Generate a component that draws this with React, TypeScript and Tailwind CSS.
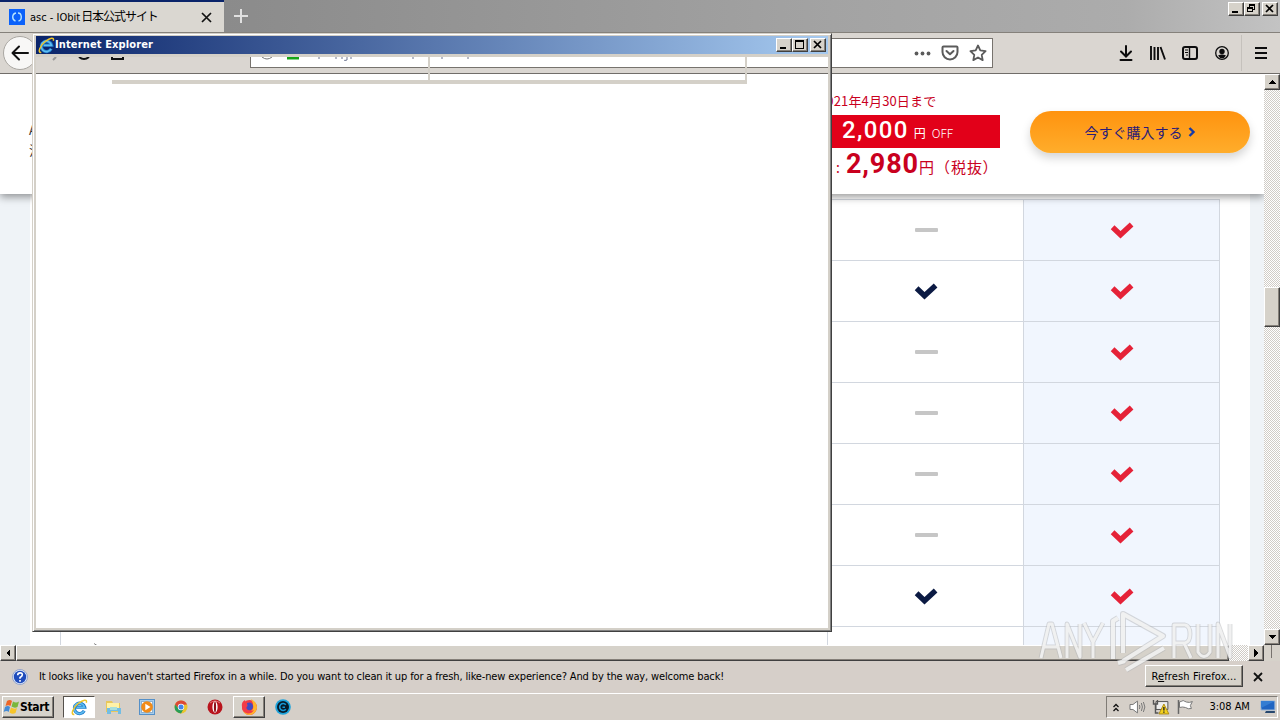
import React from "react";

const dither =
  "bg-[repeating-conic-gradient(#ffffff_0_25%,#d0ccc6_0_50%)] bg-[length:2px_2px]";
const raised =
  "bg-[#d6d2ca] border border-t-white border-l-white border-r-[#404040] border-b-[#404040] shadow-[inset_-1px_-1px_0_#858079]";

function Glyph({ kind }: { kind: "min" | "max" | "restore" | "close" }) {
  return (
    <svg width="14" height="12" viewBox="0 0 14 12" shapeRendering="crispEdges" fill="none" stroke="#000">
      {kind === "min" && <path d="M3 9h6" strokeWidth="2" />}
      {kind === "max" && (
        <>
          <path d="M2.5 2.5h8v7h-8z" />
          <path d="M2 2h9" strokeWidth="2" />
        </>
      )}
      {kind === "restore" && (
        <>
          <path d="M4.5 4V1.500h5v5H8" />
          <path d="M4 2h6" />
          <path d="M2.500 4.500h5v4h-5z" />
          <path d="M2 5h6" />
        </>
      )}
      {kind === "close" && <path d="M3 2l7 7M10 2l-7 7" strokeWidth="1.700" shapeRendering="auto" />}
    </svg>
  );
}

function WinButton({ kind, className = "" }: { kind: "min" | "max" | "restore" | "close"; className?: string }) {
  return (
    <button className={`flex h-[14px] w-4 items-center justify-center ${raised} ${className}`}>
      <Glyph kind={kind} />
    </button>
  );
}

function IEIcon({ size }: { size: number }) {
  return (
    <svg width={size} height={size} viewBox="0 0 18 18" fill="none">
      <path d="M14 12.500a5.500 5.500 0 1 1 .500-3.800H5.500" stroke="#1c78c8" strokeWidth="3.400" />
      <path d="M13.800 12.500a5.500 5.500 0 1 1 .500-3.600H6" stroke="#5fbdf0" strokeWidth="1.800" />
      <path d="M3.500 16.500C-1 17 2 9 8 4.500 12.500 1 17.500-.500 16.200 4" stroke="#eec529" strokeWidth="1.600" />
    </svg>
  );
}

function Check({ color }: { color: string }) {
  return (
    <svg width="24" height="17" viewBox="0 0 24 17" fill="none">
      <path d="M2.600 5.300l7.900 7.400L21.600 2.500" stroke={color} strokeWidth="5.400" />
    </svg>
  );
}

function FirefoxTitle() {
  return (
    <header className="flex h-[33px] shrink-0 justify-between border-b border-[#85817b] bg-[linear-gradient(90deg,#828282,#a3a3a3_65%,#acacac_88%,#c3c3c3)]">
      <div className="flex">
        <div className="flex w-[224px] items-center border-t-2 border-[#0a246a] bg-[#dad7d1] pl-[9px]">
          <span className="flex h-4 w-4 items-center justify-center bg-[#0b62fa]">
            <svg width="16" height="16" viewBox="0 0 16 16" fill="none" stroke="#b8e6ff" strokeWidth="1.400">
              <path d="M7 4C2.500 5 3 11 6.500 12M9 4c4 0 4.500 7 .500 8" />
            </svg>
          </span>
          <span className="ml-[5px] w-[171px] whitespace-nowrap text-[11px] leading-4">
            asc - IObit<span className="ml-px text-[12px] tracking-[-1.05px]">日本公式サイト</span>
          </span>
          <svg width="11" height="11" viewBox="0 0 11 11" stroke="#111" strokeWidth="1.700">
            <path d="M1 1l9 9M10 1l-9 9" />
          </svg>
        </div>
        <svg className="ml-[10px] mt-[9px]" width="14" height="14" stroke="#e0e0e0" strokeWidth="2">
          <path d="M7 0v14M0 7h14" />
        </svg>
      </div>
      <div className="flex pr-[2px] pt-[2px]">
        <WinButton kind="min" />
        <WinButton kind="restore" />
        <WinButton kind="close" className="ml-[2px]" />
      </div>
    </header>
  );
}

function FirefoxToolbar() {
  return (
    <nav className="flex h-[41px] shrink-0 items-center border-b border-[#706d69] bg-[#dad6d1]">
      <span className="ml-[3px] flex h-[34px] w-[34px] shrink-0 items-center justify-center rounded-full border border-[#aaa7a2] bg-[#f8f7f6]">
        <svg width="18" height="16" viewBox="0 0 18 16" fill="none" stroke="#111" strokeWidth="2" strokeLinecap="round" strokeLinejoin="round">
          <path d="M17 8H2M8 1.500L1.500 8 8 14.500" />
        </svg>
      </span>
      <div className="ml-[213px] flex h-[30px] w-[743px] items-center justify-end border border-[#77736e] bg-white pr-[5px]">
        <svg width="17" height="5" fill="#5b5b5b">
          <circle cx="2.500" cy="2.500" r="1.900" />
          <circle cx="8.500" cy="2.500" r="1.900" />
          <circle cx="14.500" cy="2.500" r="1.900" />
        </svg>
        <svg className="ml-[10px]" width="18" height="16" viewBox="0 0 18 16" fill="none" stroke="#5b5b5b" strokeWidth="2" strokeLinejoin="round" strokeLinecap="round">
          <path d="M2.500 1.500h13q1 0 1 1V7a7.500 7.500 0 0 1-15 0V2.500q0-1 1-1zM5.500 6L9 9.300 12.500 6" />
        </svg>
        <svg className="ml-[10px]" width="18" height="18" viewBox="0 0 18 18" fill="none" stroke="#5b5b5b" strokeWidth="1.800" strokeLinejoin="round">
          <path d="M9 1.500l2.300 4.900 5.300.700-3.900 3.700 1 5.300L9 13.500l-4.700 2.600 1-5.300L1.400 7.100l5.300-.700z" />
        </svg>
      </div>
      <div className="ml-[126px] flex items-center">
        <svg width="14" height="16" viewBox="0 0 14 16" fill="none" stroke="#0c0c0d" strokeWidth="2" strokeLinecap="round">
          <path d="M7 1v10M2 6.500l5 5 5-5M1.500 15h11" />
        </svg>
        <svg className="ml-[17px]" width="16" height="14" viewBox="0 0 16 14" stroke="#0c0c0d" strokeWidth="1.900">
          <path d="M1 0v14M4.500 1v13M8 1v13M10.500 1l4.500 12.500" />
        </svg>
        <svg className="ml-4" width="16" height="14" viewBox="0 0 16 14" fill="none" stroke="#0c0c0d">
          <rect x="1" y="1" width="14" height="12" rx="2" strokeWidth="2" />
          <path d="M7.500 1v12" strokeWidth="1.400" />
          <path d="M3 4h3M3 6.500h3M4 9h2" />
        </svg>
        <svg className="ml-[17px]" width="14" height="14" viewBox="0 0 14 14" fill="none">
          <circle cx="7" cy="7" r="6.300" stroke="#0c0c0d" strokeWidth="1.300" />
          <circle cx="7" cy="5.500" r="2.700" fill="#0c0c0d" />
          <path d="M3 9.500q4-2 8 0-1.500 2.800-4 2.800T3 9.500z" fill="#0c0c0d" />
        </svg>
        <span className="ml-[12px] h-9 w-px bg-[#c5c1bc]" />
        <svg className="ml-[13px]" width="12" height="12" stroke="#0c0c0d" strokeWidth="2">
          <path d="M0 1h12M0 6h12M0 11h12" />
        </svg>
      </div>
    </nav>
  );
}

function Offer() {
  return (
    <div className="relative z-10 flex h-[120px] shrink-0 bg-white shadow-[0_3px_8px_rgba(0,0,0,0.4)]">
      <div className="w-[800px] pl-[29px] pt-[46px] text-[13px] leading-[20px] text-[#333]">
        <p>Advanced</p>
        <p>注文</p>
      </div>
      <div className="w-[200px] text-[#c9001e]">
        <p className="mt-[18px] h-[23px] whitespace-nowrap pl-[19px] text-[13px] leading-[18px] tracking-[0.15px]">2021年4月30日まで</p>
        <p className="h-[33px] whitespace-nowrap bg-[#e20019] pl-[42px] leading-[31px] text-white">
          <span className="font-[Roboto] text-[24px] font-medium tracking-[1.35px]">2,000</span>
          <span className="ml-[5px] text-[12px]">円</span>
          <span className="ml-[6px] text-[12px] font-light">OFF</span>
        </p>
        <p className="whitespace-nowrap pl-[36px] leading-[33px]">
          <span className="text-[14px]">:</span>
          <span className="ml-[6px] font-[Roboto] text-[27px] font-bold tracking-[0.9px]">2,980</span>
          <span className="text-[15px] tracking-[1px]">円（税<span className="tracking-[0.5px]">抜</span>）</span>
        </p>
      </div>
      <button className="ml-[30px] mt-[37px] flex h-[42px] w-[220px] items-center justify-center rounded-full bg-[linear-gradient(#ff930f,#ffad2b)] text-[14px] text-[#2b1b78] shadow-[0_5px_10px_rgba(0,0,0,0.17)]">
        今すぐ購入する
        <svg className="ml-[5px]" width="8" height="10" viewBox="0 0 8 10" fill="none" stroke="#163aa8" strokeWidth="2.400">
          <path d="M1.500 1l4 4-4 4" />
        </svg>
      </button>
    </div>
  );
}

const rows = [false, true, false, false, false, false, true];

function Comparison() {
  return (
    <div className="ml-[30px] h-[451px] w-[1220px] overflow-hidden bg-white pl-[30px] pt-[5px]">
      <div className="w-[1160px] border-x border-[#d2d7df]">
        {rows.map((included, i) => (
          <div key={i} className="flex h-[61px] border-t border-[#d2d7df]">
            <span className="w-[766px]" />
            <span className="flex w-[197px] items-center justify-center border-x border-[#d2d7df]">
              {included ? <Check color="#0b1a43" /> : <span className="ml-px h-1 w-[23px] rounded-[1px] bg-[#c6c6c6]" />}
            </span>
            <span className="flex w-[195px] items-center justify-center bg-[#f1f6fe]">
              <Check color="#e52238" />
            </span>
          </div>
        ))}
        <div className="flex h-[30px] border-t border-[#d2d7df]">
          <span className="w-[766px] pl-[33px] pt-[16px]">
            <svg width="4" height="3" stroke="#888" fill="none"><path d="M0 .5l3 2" /></svg>
          </span>
          <span className="w-[197px] border-x border-[#d2d7df]" />
          <span className="w-[195px] bg-[#f1f6fe]" />
        </div>
      </div>
    </div>
  );
}

function Arrow({ d }: { d: string }) {
  return (
    <svg width="8" height="8" viewBox="0 0 8 8" shapeRendering="crispEdges">
      <path d={d} />
    </svg>
  );
}

function VerticalScroll() {
  return (
    <div className={`flex w-4 flex-col ${dither}`}>
      <span className={`flex h-4 items-center justify-center ${raised}`}><Arrow d="M0 6h8L4 2z" /></span>
      <span className={`mt-[197px] h-10 ${raised}`} />
      <span className={`mt-auto flex h-4 items-center justify-center ${raised}`}><Arrow d="M0 2h8L4 6z" /></span>
    </div>
  );
}

function Notice() {
  return (
    <div className="flex h-[32px] shrink-0 items-center bg-[#d6cfc9]">
      <svg className="ml-[12px]" width="16" height="16" viewBox="0 0 16 16">
        <circle cx="8" cy="8" r="7.500" fill="#dce7fa" stroke="#8296c4" strokeWidth=".8" />
        <circle cx="8" cy="8" r="6.200" fill="#1f4cbc" />
        <path d="M5.700 6.200q0-2.300 2.400-2.300t2.200 2Q10.200 7.300 8 8.500v1.300M8 11v1.700" fill="none" stroke="#fff" strokeWidth="1.600" />
      </svg>
      <p className="ml-[11px] w-[1106px] whitespace-nowrap text-[11px] tracking-[-0.138px]">
        It looks like you haven't started Firefox in a while. Do you want to clean it up for a fresh, like-new experience? And by the way, welcome back!
      </p>
      <button className={`-mt-[2px] h-[22px] w-[98px] whitespace-nowrap text-[11px] leading-[19px] tracking-[0.15px] ${raised}`}>
        R<span className="underline">e</span>fresh Firefox...
      </button>
      <svg className="ml-[10px]" width="10" height="10" stroke="#111" strokeWidth="1.800"><path d="M1 1l8 8M9 1L1 9" /></svg>
    </div>
  );
}

function Taskbar() {
  return (
    <footer className="flex h-[27px] shrink-0 items-center border-t border-white bg-[#d5cfc8]">
      <button className={`ml-[2px] flex h-[22px] w-[52px] items-center text-[12px] font-bold tracking-[-0.35px] ${raised}`}>
        <svg width="17" height="16" viewBox="0 0 17 16">
          <path d="M4 2q3-2 5 0L7.500 7q-2-1.500-5 0z" fill="#ee6526" />
          <path d="M10 2.500q3 2 6 0L14.500 8q-3 1.500-6-.500z" fill="#79b73c" />
          <path d="M2 8q3-2 5 0l-1.300 5q-2-1.800-5 0z" fill="#458bd5" />
          <path d="M8 8.500q3 2 6 .500l-1.500 5q-3 1.800-6-.500z" fill="#f7c52b" />
        </svg>
        Start
      </button>
      <span className="ml-[9px] flex h-[22px] w-8 items-center justify-center border border-[#55514c] border-b-white border-r-white bg-white"><IEIcon size={17} /></span>
      <svg className="ml-[10px]" width="17" height="16" viewBox="0 0 17 16">
        <path d="M1 2h6l1 2h7v9H1z" fill="#e8c75b" />
        <path d="M2 4h12v5H2z" fill="#fff2a6" />
        <path d="M2 9h14v6h-3v-3H6v3H2z" fill="#72bde4" />
        <path d="M5 8h7v3H5z" fill="#a8dfda" />
      </svg>
      <svg className="ml-[17px]" width="17" height="17" viewBox="0 0 17 17">
        <rect x=".5" y=".5" width="15" height="15" fill="#a5cdec" stroke="#5590c8" />
        <rect x="2.500" y="2.500" width="11" height="11" fill="#fff" stroke="#8db0cf" />
        <circle cx="8" cy="8" r="5.800" fill="#f18b18" />
        <path d="M6.300 4.800L11.500 8l-5.200 3.200z" fill="#fff" />
      </svg>
      <svg className="ml-[18px]" width="14" height="14" viewBox="0 0 14 14">
        <circle cx="7" cy="7" r="6.500" fill="#eac52f" />
        <path d="M1 4.500A6.500 6.500 0 0 1 13 4.500L7 5 5 9z" fill="#dc4936" />
        <path d="M1 4.500Q-1 12 7 13.500L9.500 9H5z" fill="#299c58" />
        <circle cx="7" cy="7" r="3.200" fill="#fff" />
        <circle cx="7" cy="7" r="2.500" fill="#4386ea" />
      </svg>
      <svg className="ml-[19px]" width="16" height="16" viewBox="0 0 16 16">
        <circle cx="8" cy="8" r="7.500" fill="#b9141d" />
        <path d="M3 4q5-4 10 0" stroke="#e97979" fill="none" />
        <ellipse cx="8" cy="8" rx="2.600" ry="5.800" fill="#fff" />
        <ellipse cx="8" cy="8" rx="1.100" ry="5.300" fill="#8d0e16" />
      </svg>
      <span className={`ml-[10px] flex h-[22px] w-8 items-center justify-center ${raised}`}>
        <svg width="17" height="17" viewBox="0 0 17 17">
          <circle cx="8.500" cy="8.500" r="7.500" fill="#f03e42" />
          <path d="M10 0q6 3 6 9-1 6-7 7Q3 16 2 11q7 4 10-1 1-5-2-10z" fill="#ffb52b" />
          <path d="M1 8Q0 3 4 1l1 3q3-2 6 0Q7 6 9 8L6 10q4 3 7 1-3 5-8 3-4-2-4-6z" fill="#f33c48" />
          <path d="M6 4q5-2 6 3 0 5-5 4-3-2-.500-4z" fill="#424ac2" />
        </svg>
      </span>
      <svg className="ml-[10px]" width="16" height="16" viewBox="0 0 16 16">
        <circle cx="8" cy="8" r="7.800" fill="#1ca3dc" />
        <circle cx="8" cy="8" r="6" fill="#071b2a" />
        <path d="M10.800 5.700A3.500 3.500 0 1 0 10.800 10.300M7.500 8.300h2.500" fill="none" stroke="#1697d5" strokeWidth="1.600" />
      </svg>
      <div className="ml-auto mr-[2px] flex h-[22px] w-[172px] items-center border border-[#807c76] border-b-white border-r-white">
        <svg className="ml-[6px]" width="6" height="9" fill="none" stroke="#111" strokeWidth="1.300"><path d="M.5 4L3 1.500 5.500 4M.5 8L3 5.500 5.500 8" /></svg>
        <svg className="ml-[10px]" width="17" height="14" viewBox="0 0 17 14" fill="none" stroke="#777" strokeWidth="1">
          <path d="M1 4.500h3L8.500 1v12L4 9.500H1z" fill="#fff" />
          <path d="M10.500 5q1 2 0 4M12.500 3q2 4 0 8M14.500 2q3 5 0 10" />
        </svg>
        <svg className="ml-[6px]" width="18" height="16" viewBox="0 0 18 16">
          <path d="M4 2.500h12v8H4z" fill="#eee" stroke="#555" />
          <path d="M1.500 1v4h4V1M3.500 5v9h3" fill="none" stroke="#555" strokeWidth="1.400" />
          <path d="M12 5l5 10H7z" fill="#f4d21f" stroke="#ad8c17" />
          <path d="M12 8v3.500M12 12.500v1.200" stroke="#222" strokeWidth="1.400" />
        </svg>
        <svg className="ml-[7px]" width="17" height="16" viewBox="0 0 17 16">
          <path d="M2.500 3q4-3 7 0 3 1 6-.5l-2 4 1 3q-3 1-6-1-3-1-6 0z" fill="#fff" stroke="#777" />
          <path d="M1.500 1v14" stroke="#666" strokeWidth="1.500" />
        </svg>
        <span className="ml-[16px] w-[42px] whitespace-nowrap text-[11px] tracking-[-0.05px]">3:08 AM</span>
        <svg className="ml-[9px]" width="17" height="14" viewBox="0 0 17 14">
          <path d="M1 1h14v9H1z" fill="#2065c2" stroke="#9ab5d5" />
          <path d="M1 1h14L1 8z" fill="#347dd2" />
          <path d="M6 11h9v2H5z" fill="#26476e" />
        </svg>
      </div>
    </footer>
  );
}

function ExplorerWindow() {
  return (
    <section className="absolute left-[32px] top-[33px] z-20 flex h-[599px] w-[800px] flex-col border border-[#d4d0c8] border-b-[#404040] border-r-[#404040] bg-[#d4d0c8] pb-[3px] pl-[3px] pr-[3px] pt-[2px] shadow-[inset_1px_1px_0_#fff,inset_-1px_-1px_0_#808080]">
      <div className="flex h-[18px] shrink-0 items-center bg-[linear-gradient(90deg,#0a246a,#a6caf0)] text-white">
        <span className="ml-[2px]"><IEIcon size={17} /></span>
        <span className="whitespace-nowrap text-[11px] font-bold tracking-[0.13px]">Internet Explorer</span>
        <div className="ml-auto mr-[2px] flex">
          <WinButton kind="min" />
          <WinButton kind="max" />
          <WinButton kind="close" className="ml-[2px]" />
        </div>
      </div>
      <div className="mt-[3px] flex min-h-0 flex-1 flex-col bg-white">
        <div className="relative h-[27px] shrink-0">
          <div className="h-[17px] border-b border-[#706d69] bg-[#dad6d1] pl-[214px]">
            <div className="h-[11px] border-b border-l border-[#77736e] bg-white">
              <svg width="300" height="4" fill="none">
                <path d="M11 0q5 4 10 0" stroke="#777" />
                <path d="M36 1h12" stroke="#16a516" strokeWidth="3" />
                <path d="M68 0v2M85 0v2M91 0v2M96 0v3q-3 1-3 0M100 0v2M162 0v2M191 0v2M217 0v2" stroke="#6d7590" />
              </svg>
            </div>
          </div>
          <div className="absolute left-[76px] top-0 h-[27px] w-[635px] border-b-4 border-r-2 border-[#d4d0c8]">
            <div className="h-full w-[318px] border-r-2 border-[#d4d0c8]" />
          </div>
          <svg className="absolute left-[16px] top-0" width="75" height="5" fill="none">
            <path d="M1 3l3-3" stroke="#999" strokeWidth="2" />
            <path d="M27 0q5 4 10 0M60 0v2h11V0" stroke="#111" strokeWidth="2" />
          </svg>
        </div>
      </div>
    </section>
  );
}

const letters =
  "M3 50L11 16h3l9 34M6 39h13M29 50V16l13 33V16M46 15l9 19v16M55 34l10-19M136 50V17h11q5 1 5 9t-5 9h-11M146 35l7 15M160 16v28q6 9 12 0V16M180 50V16l12 33V16";
const emblem = "M75 51V13l5-3M85 45V6l40 22-40 25M80 55l7-2M88 62l38-22";

function Watermark() {
  return (
    <svg className="absolute left-[1038px] top-[608px] z-30" width="196" height="66" viewBox="0 0 196 66" fill="none" strokeLinejoin="round">
      <g stroke="#b4b6b8" opacity=".5">
        <path d={letters} strokeWidth="4.800" />
        <path d={emblem} strokeWidth="6" />
      </g>
      <g stroke="#f6f6f6" opacity=".85">
        <path d={letters} strokeWidth="3" />
        <path d={emblem} strokeWidth="4" />
      </g>
    </svg>
  );
}

export default function App() {
  return (
    <div className="relative flex h-[720px] w-[1280px] flex-col overflow-hidden bg-white font-['DejaVu_Sans_Condensed','Noto_Sans_CJK_JP',sans-serif] text-black">
      <FirefoxTitle />
      <FirefoxToolbar />
      <main className="flex h-[571px] shrink-0">
        <div className="w-[1264px] overflow-hidden bg-[#eff3f7] font-['Noto_Sans_CJK_JP',sans-serif]">
          <Offer />
          <Comparison />
        </div>
        <VerticalScroll />
      </main>
      <div className={`flex h-4 shrink-0 ${dither}`}>
        <span className={`flex w-4 items-center justify-center ${raised}`}><Arrow d="M6 0v8L2 4z" /></span>
        <span className={`w-[1213px] ${raised}`} />
        <span className={`ml-auto flex w-4 items-center justify-center ${raised}`}><Arrow d="M2 0v8l4-4z" /></span>
        <span className="flex w-4 bg-[#d6d2ca] pl-[7px]"><span className="h-[13px] w-px bg-[#77736e]" /></span>
      </div>
      <Notice />
      <Taskbar />
      <ExplorerWindow />
      <Watermark />
    </div>
  );
}
